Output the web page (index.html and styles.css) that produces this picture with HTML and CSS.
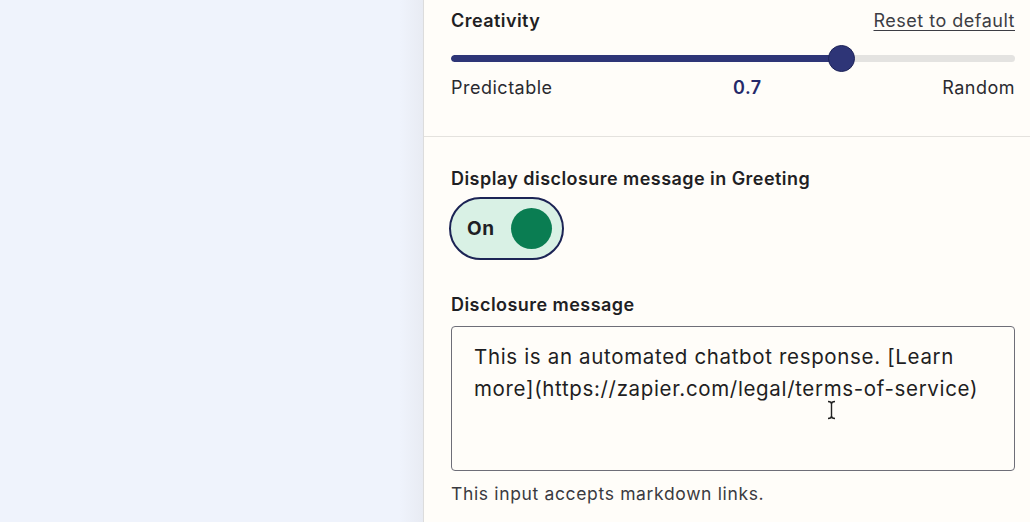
FILE: index.html
```html
<!DOCTYPE html>
<html lang="en">
<head>
<meta charset="utf-8">
<link rel="stylesheet" href="styles.css">
</head>
<body>
<div class="page">
  <div class="canvas"></div>
  <aside class="panel">
    <section class="section creativity">
      <div class="row head">
        <span class="label">Creativity</span>
        <a class="reset" href="#">Reset to default</a>
      </div>
      <div class="slider">
        <div class="track"><div class="fill" style="width:69.3%"></div></div>
        <div class="knob" style="left:69.3%"></div>
      </div>
      <div class="row scale">
        <span>Predictable</span>
        <span class="value">0.7</span>
        <span>Random</span>
      </div>
    </section>
    <section class="section disclosure">
      <div class="label">Display disclosure message in Greeting</div>
      <button class="toggle" type="button"><span>On</span><span class="dot"></span></button>
      <div class="label msg-label">Disclosure message</div>
      <div class="textarea">
        This is an automated chatbot response. [Learn more](https://zapier.com/legal/terms-of-service)
        <svg class="cursor" width="9" height="20" viewBox="0 0 9 20"><path d="M1 1.5 Q4.5 1.5 4.5 4 V16 Q4.5 18.5 1 18.5 M8 1.5 Q4.5 1.5 4.5 4 M4.5 16 Q4.5 18.5 8 18.5" fill="none" stroke="#222" stroke-width="1.4"/></svg>
      </div>
      <div class="hint">This input accepts markdown links.</div>
    </section>
  </aside>
</div>
</body>
</html>
```
FILE: styles.css
```css
* { box-sizing: border-box; }
html, body { margin: 0; height: 100%; }
body {
  font-family: Inter, "Noto Sans", sans-serif;
  color: #1f1f24;
  overflow: hidden;
}
.page {
  display: flex;
  height: 522px;
  width: 1030px;
}
.canvas {
  width: 423px;
  background: linear-gradient(to right, #eff3fc 0, #eff3fc 400px, #e8ebf3 423px);
}
.panel {
  flex: 1;
  background: #fffdf9;
  border-left: 1px solid #dcdcdc;
  padding: 0 15px 0 27px;
}
.section { display: flex; flex-direction: column; }
.creativity {
  padding-top: 10px;
  height: 137px;
  border-bottom: 1px solid #e4e2de;
  margin: 0 -15px 0 -27px;
  padding-left: 27px;
  padding-right: 15px;
}
.row { display: flex; justify-content: space-between; align-items: center; }
.label {
  font-size: 18px;
  font-weight: 600;
  letter-spacing: 0.45px;
  line-height: 22px;
}
.reset {
  color: #3d3d44;
  font-size: 18px;
  letter-spacing: 0.5px;
  line-height: 22px;
  text-decoration: underline;
  text-underline-offset: 3px;
  text-decoration-thickness: 1px;
}
.slider {
  position: relative;
  height: 30px;
  margin-top: 11px;
  display: flex;
  align-items: center;
}
.track {
  width: 100%;
  height: 7px;
  border-radius: 4px;
  background: #e4e3e1;
  overflow: hidden;
}
.fill { height: 100%; background: #2e3577; border-radius: 4px; }
.knob {
  position: absolute;
  top: 2px;
  width: 27px;
  height: 27px;
  margin-left: -14px;
  border-radius: 50%;
  background: #2e3577;
  border: 1px solid #1d2358;
}
.scale {
  margin-top: 4px;
  font-size: 18px;
  letter-spacing: 0.5px;
  line-height: 22px;
  color: #2a2a30;
}
.scale .value { color: #25296a; font-weight: 600; }
.disclosure { padding-top: 31px; align-items: flex-start; }
.toggle {
  margin: 7px 0 0 -2px;
  width: 115px;
  height: 63px;
  border: 2px solid #1c2455;
  border-radius: 32px;
  background: #d9f1e5;
  display: flex;
  align-items: center;
  justify-content: space-between;
  padding: 0 10px 0 16px;
  font-family: inherit;
  font-size: 19px;
  letter-spacing: 0.5px;
  font-weight: 700;
  color: #1f1f24;
}
.dot {
  width: 41px;
  height: 41px;
  border-radius: 50%;
  background: #0a7d52;
}
.msg-label { margin-top: 34px; }
.textarea {
  position: relative;
  margin-top: 10px;
  width: 564px;
  height: 145px;
  border: 1.5px solid #6e6e78;
  border-radius: 4px;
  padding: 14px 30px 0 22px;
  font-size: 20.5px;
  letter-spacing: 0.66px;
  line-height: 32px;
  color: #1e1e22;
}
.cursor {
  position: absolute;
  left: 375px;
  top: 73px;
}
.hint {
  margin-top: 12px;
  font-size: 17.5px;
  letter-spacing: 0.65px;
  line-height: 22px;
  color: #3a3a40;
}
```
